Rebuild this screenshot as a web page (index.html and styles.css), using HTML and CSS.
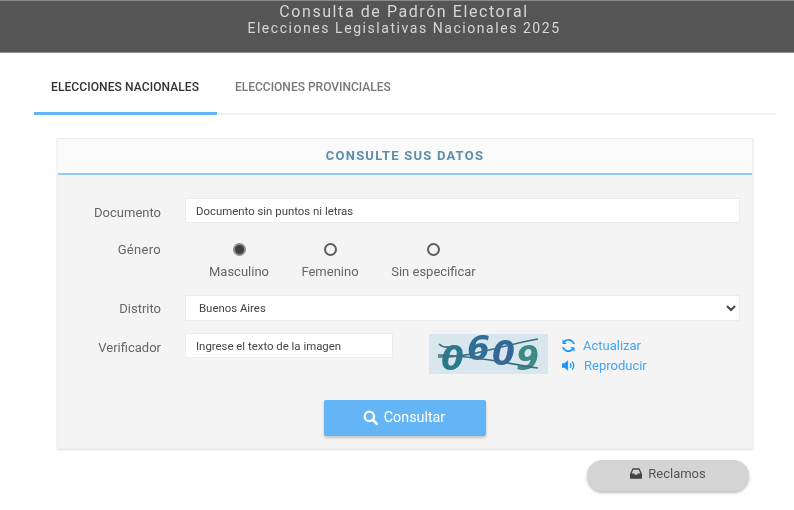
FILE: index.html
```html
<!DOCTYPE html>
<html lang="es">
  <head>
    <meta charset="UTF-8" />
    <meta name="viewport" content="width=device-width, initial-scale=1.0" />
    <title>Consulta de Padrón Electoral</title>
    <link rel="stylesheet" href="styles.css">
  </head>
  <body>
    <header class="top-bar">
      <h1>Consulta de Padrón Electoral</h1>
      <h2>Elecciones Legislativas Nacionales 2025</h2>
    </header>

    <nav class="tabs">
      <a class="tab active">ELECCIONES NACIONALES</a>
      <a class="tab">ELECCIONES PROVINCIALES</a>
    </nav>

    <section class="card">
      <div class="card-head">CONSULTE SUS DATOS</div>
      <form class="card-body">
        <div class="row row-doc">
          <label class="row-label">Documento</label>
          <input class="field" type="text" placeholder="Documento sin puntos ni letras">
        </div>

        <div class="row row-gender">
          <label class="row-label">Género</label>
          <div class="radios">
            <label class="radio-item r1"><input type="radio" name="genero" checked><span>Masculino</span></label>
            <label class="radio-item r2"><input type="radio" name="genero"><span>Femenino</span></label>
            <label class="radio-item r3"><input type="radio" name="genero"><span>Sin especificar</span></label>
          </div>
        </div>

        <div class="row row-district">
          <label class="row-label">Distrito</label>
          <select class="field select">
            <option>Buenos Aires</option>
          </select>
        </div>

        <div class="row row-captcha">
          <label class="row-label">Verificador</label>
          <div class="captcha-wrap">
            <input class="field code" type="text" placeholder="Ingrese el texto de la imagen">
            <svg class="captcha" width="119" height="40" viewBox="0 0 119 40">
              <rect width="119" height="40" fill="#d8e6ee"/>
              <text x="12" y="36" class="digit" fill="#2a7a8f">0</text>
              <text x="38" y="26" class="digit" fill="#2f6f96">6</text>
              <text x="63" y="31" class="digit" fill="#33669c">0</text>
              <text x="87" y="36" class="digit" fill="#3b8a84">9</text>
              <path d="M9 23C40 24 70 12 109 5" fill="none" stroke="#3d6f80" stroke-width="1.6"/>
              <path d="M9 21C50 22 80 30 109 34" fill="none" stroke="#3d6f80" stroke-width="1.6"/>
              <path d="M10 10C14 14 18 14 24 12" fill="none" stroke="#3d6f80" stroke-width="1.6"/>
            </svg>
            <div class="captcha-links">
              <a class="link">
                <svg width="13" height="13" viewBox="0 0 16 16"><path fill="#2196f3" d="M13.6 6.2h2.2C15 2.6 11.8 0 8 0 5.800 0 3.900.9 2.400 2.300L.6.600V6h5.300L3.900 4c1-1 2.500-1.700 4.100-1.700 2.700 0 5 1.700 5.600 3.900zM2.400 9.800H.2C1 13.400 4.200 16 8 16c2.200 0 4.100-.9 5.600-2.300l1.800 1.700V10h-5.300l2 2c-1 1-2.500 1.700-4.100 1.700-2.700 0-5-1.700-5.600-3.900z"/></svg>
                Actualizar
              </a>
              <a class="link">
                <svg width="14" height="13" viewBox="0 0 16 14"><path fill="#2196f3" d="M0 4.500h2.800L7 1v12L2.800 9.500H0z"/><path fill="none" stroke="#2196f3" stroke-width="1.500" d="M9.200 4.500c1.300 1.400 1.300 3.600 0 5M11.600 2.500c2.400 2.500 2.400 6.500 0 9"/></svg>
                Reproducir
              </a>
            </div>
          </div>
        </div>

        <div class="actions">
          <button class="btn-search" type="button">
            <svg width="15" height="15" viewBox="0 0 16 16"><circle cx="6.800" cy="6.800" r="5" fill="none" stroke="#fff" stroke-width="2.400"/><path d="M10.600 10.600L15 15" stroke="#fff" stroke-width="2.800" stroke-linecap="round"/></svg>
            Consultar
          </button>
        </div>
      </form>
    </section>

    <div class="footer-actions">
      <button class="btn-claims" type="button">
        <svg width="12" height="11" viewBox="0 0 14 12"><path fill="#444" d="M3 0h8l3 6.500V12H0V6.500zM3.800 1.600L2 6h3l.8 1.600h2.400L9 6h3l-1.800-4.400z"/></svg>
        Reclamos
      </button>
    </div>
  </body>
</html>
```

FILE: styles.css
```css
* {
  box-sizing: border-box;
}

body {
  margin: 0;
  min-height: 100vh;
  background-color: #fff;
  font-family: Roboto, "Liberation Sans", sans-serif;
  color: #666;
  /* the source capture is soft */
  filter: blur(0.5px);
}

.top-bar {
  height: 53px;
  padding: 2px 0 0 14px;
  background-color: #555;
  border-top: 1px solid #8a8a8a;
  border-bottom: 1px solid #8f8f8f;
  text-align: center;
  color: #d6d6d6;
}
.top-bar h1 {
  margin: 0;
  font-size: 16px;
  line-height: 17px;
  font-weight: 400;
  letter-spacing: 1.57px;
}
.top-bar h2 {
  margin: 0;
  font-size: 14px;
  line-height: 17px;
  font-weight: 400;
  letter-spacing: 1.55px;
}

.tabs {
  display: flex;
  height: 62px;
  margin: 0 18px 0 34px;
  border-bottom: 2px solid #f3f3f3;
}
.tab {
  height: 62px;
  padding: 27px 17px 0 18px;
  font-size: 12px;
  font-weight: 500;
  color: #777;
}
.tab.active {
  width: 183px;
  padding-left: 17px;
  letter-spacing: 0.1px;
  color: #333;
  border-bottom: 3px solid #64b5f6;
}

.card {
  width: 696px;
  height: 311px;
  margin: 23px 0 0 57px;
  background-color: #f4f4f4;
  border: 1px solid #eeeeee;
  border-top: 1px solid #ececec;
  box-shadow: 0 1px 2px rgba(0, 0, 0, 0.12);
}
.card-head {
  height: 36px;
  padding-top: 9px;
  background-color: #fafafa;
  border-bottom: 2px solid #90caf9;
  text-align: center;
  font-size: 13px;
  font-weight: 700;
  letter-spacing: 1.22px;
  color: #5b8fa8;
}
.card-body {
  padding: 23px 12px 0 0;
}

.row {
  display: grid;
  grid-template-columns: 103px 1fr;
  column-gap: 24px;
}
.row-label {
  text-align: right;
  font-size: 13px;
  color: #666;
}
.row-doc {
  height: 25px;
}
.row-doc .row-label {
  padding-top: 7px;
}
.row-gender {
  height: 72px;
  padding-top: 20px;
}
.row-gender .row-label {
  margin-top: -1px;
  letter-spacing: 0.3px;
}
.row-district {
  height: 38px;
}
.row-district .row-label {
  padding-top: 6px;
}
.row-captcha .row-label {
  padding-top: 7px;
}

.field {
  width: 100%;
  height: 25px;
  padding: 0 10px;
  background-color: #fff;
  border: 1px solid #ececec;
  font-family: Roboto, "Liberation Sans", sans-serif;
  font-size: 11.4px;
  color: #444;
}
.field::placeholder {
  color: #444;
  opacity: 1;
}
.select {
  height: 26px;
  padding-left: 9px;
}
.code {
  width: 208px;
  flex: none;
}

.radios {
  display: flex;
  padding-left: 24px;
}
.radio-item {
  display: flex;
  flex-direction: column;
  align-items: center;
  font-size: 13px;
  color: #666;
}
.radio-item input {
  appearance: none;
  width: 13px;
  height: 13px;
  margin: 0 0 8px;
  background-color: transparent;
  border: 2px solid #5c5c5c;
  border-radius: 50%;
}
.radio-item input:checked {
  background-color: #3f3f3f;
  border-color: #8c8c8c;
}
.r1 {
  width: 60px;
}
.r2 {
  width: 58px;
  margin-left: 32px;
}
.r3 {
  width: 85px;
  margin-left: 32px;
}

.captcha-wrap {
  display: flex;
  align-items: flex-start;
}
.captcha {
  flex: none;
  margin: 1px 0 0 36px;
  overflow: visible;
}
.digit {
  font-family: "DejaVu Sans", sans-serif;
  font-size: 33px;
  font-weight: 700;
  font-style: italic;
}
.captcha-links {
  display: flex;
  flex-direction: column;
  gap: 5px;
  margin: 5px 0 0 14px;
}
.link {
  display: flex;
  align-items: center;
  gap: 8px;
  height: 15px;
  font-size: 13px;
  color: #42a5f5;
}

.actions {
  padding: 26px 0 0 266px;
}
.btn-search {
  display: flex;
  align-items: center;
  justify-content: center;
  gap: 6px;
  width: 162px;
  height: 36px;
  padding: 0 2px 2px 0;
  background-color: #64b5f6;
  border: none;
  border-radius: 2px;
  box-shadow: 0 2px 3px rgba(0, 0, 0, 0.2);
  font-family: Roboto, "Liberation Sans", sans-serif;
  font-size: 14.3px;
  color: #fff;
}

.footer-actions {
  display: flex;
  justify-content: flex-end;
  padding: 11px 45px 0 0;
}
.btn-claims {
  display: flex;
  align-items: center;
  justify-content: center;
  gap: 6px;
  width: 162px;
  height: 31px;
  padding: 0 0 4px;
  background-color: #d4d4d4;
  border: none;
  border-radius: 16px;
  box-shadow: 0 2px 3px rgba(0, 0, 0, 0.25);
  font-family: Roboto, "Liberation Sans", sans-serif;
  font-size: 13px;
  color: #555;
}
```
